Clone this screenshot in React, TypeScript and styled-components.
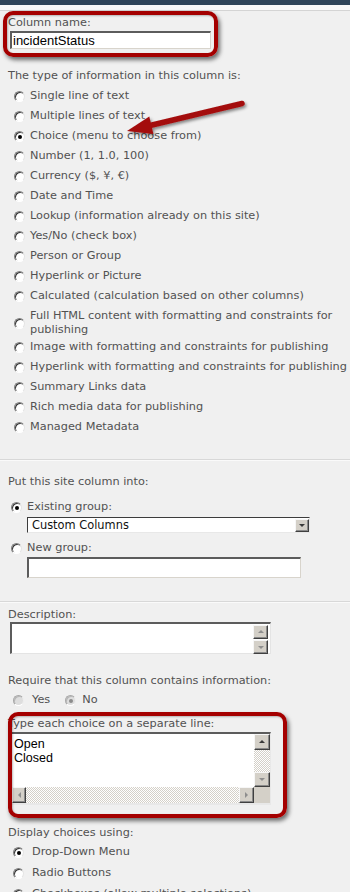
import React from "react";
import styled, { createGlobalStyle } from "styled-components";

const Global = createGlobalStyle`
  html, body { margin: 0; padding: 0; background: #f0f0f0; }
  body {
    font-family: "DejaVu Sans", Verdana, sans-serif;
    font-size: 11.3px;
    color: #525252;
  }
  #root { width: 350px; }
`;

const Page = styled.div`
  position: relative;
  width: 350px;
  height: 892px;
  overflow: hidden;
  background: #f0f0f0;
`;

const TopBar = styled.div`
  height: 5px;
  background: #2f4459;
`;

const TopStrip = styled.div`
  height: 5px;
  background: #f8f8f8;
  border-bottom: 1px solid #d4d4d4;
`;

const Rule = styled.div<{ $mt: number }>`
  margin-top: ${(p) => p.$mt}px;
  height: 1px;
  background: #d8d8d8;
  border-bottom: 1px solid #fafafa;
`;

const Label = styled.div<{ $mt: number }>`
  margin-top: ${(p) => p.$mt}px;
  padding-left: 8px;
  line-height: 14px;
  white-space: nowrap;
`;

const TextInput = styled.div<{ $mt: number; $ml: number; $w: number; $h: number }>`
  box-sizing: border-box;
  margin-top: ${(p) => p.$mt}px;
  margin-left: ${(p) => p.$ml}px;
  width: ${(p) => p.$w}px;
  height: ${(p) => p.$h}px;
  background: #fff;
  border-style: solid;
  border-width: 2px 1px 1px 2px;
  border-color: #5c5c5c #d8d4cc #d8d4cc #5c5c5c;
  font-family: "Liberation Sans", Arial, sans-serif;
  font-size: 13px;
  line-height: 15px;
  color: #000;
  padding-left: 1px;
  white-space: nowrap;
`;

const RadioList = styled.div<{ $mt: number }>`
  margin-top: ${(p) => p.$mt}px;
  display: flex;
  flex-direction: column;
`;

const OptionRow = styled.div<{ $indent: number; $gap: number; $pt?: number; $pb?: number }>`
  display: flex;
  align-items: center;
  gap: ${(p) => p.$gap}px;
  padding-left: ${(p) => p.$indent}px;
  padding-top: ${(p) => p.$pt ?? 3}px;
  padding-bottom: ${(p) => p.$pb ?? 3}px;
  line-height: 14px;
`;

const OptionText = styled.span<{ $wrap?: boolean }>`
  white-space: ${(p) => (p.$wrap ? "normal" : "nowrap")};
  max-width: ${(p) => (p.$wrap ? "318px" : "none")};
`;

const InlineOptions = styled.div<{ $mt: number }>`
  margin-top: ${(p) => p.$mt}px;
  display: flex;
  align-items: center;
`;

const Radio = styled.span<{ $checked?: boolean; $disabled?: boolean }>`
  flex: none;
  position: relative;
  box-sizing: border-box;
  width: 11px;
  height: 11px;
  border-radius: 50%;
  border: 1px solid;
  border-color: ${(p) =>
    p.$disabled ? "#a8a8a8 #eeeeee #ffffff #a8a8a8" : "#808080 #e4e4e4 #ffffff #808080"};
  background: ${(p) => (p.$disabled ? "#dedede" : "#ffffff")};
  box-shadow: inset 1px 1px 0 ${(p) => (p.$disabled ? "#b8b8b8" : "#3a3a3a")};
  &::after {
    content: "";
    display: ${(p) => (p.$checked ? "block" : "none")};
    position: absolute;
    left: 3px;
    top: 3px;
    width: 4px;
    height: 4px;
    border-radius: 50%;
    background: ${(p) => (p.$disabled ? "#8c8c8c" : "#000")};
  }
`;

const SelectBox = styled.div`
  box-sizing: border-box;
  margin-left: 27px;
  width: 283px;
  height: 16px;
  background: #fff;
  border-style: solid;
  border-width: 1px;
  border-color: #3c3c3c #e8e8e8 #e8e8e8 #3c3c3c;
  display: flex;
  align-items: center;
  font-size: 11.4px;
  color: #111;
`;

const SelectValue = styled.span`
  flex: 1;
  padding-left: 4px;
  line-height: 14px;
  white-space: nowrap;
`;

const ArrowButton = styled.div<{ $dir: "up" | "down" | "left" | "right"; $muted?: boolean; $w: number; $h: number }>`
  flex: none;
  box-sizing: border-box;
  width: ${(p) => p.$w}px;
  height: ${(p) => p.$h}px;
  background: #d4d0c8;
  border: 1px solid;
  border-color: #f6f6f6 #404040 #404040 #f6f6f6;
  box-shadow: inset -1px -1px 0 #8a8a8a;
  display: flex;
  align-items: center;
  justify-content: center;
  &::after {
    content: "";
    width: 0;
    height: 0;
    border: 3px solid transparent;
    ${(p) => {
      const c = p.$muted ? "#8e8e8e" : "#3a3a3a";
      switch (p.$dir) {
        case "up":
          return `border-bottom-color:${c}; border-top-width:0; margin-top:-1px;`;
        case "down":
          return `border-top-color:${c}; border-bottom-width:0;`;
        case "left":
          return `border-right-color:${c}; border-left-width:0;`;
        default:
          return `border-left-color:${c}; border-right-width:0;`;
      }
    }}
  }
`;

const DescBox = styled.div`
  box-sizing: border-box;
  margin-left: 10px;
  width: 261px;
  height: 32px;
  background: #fff;
  border-style: solid;
  border-width: 2px 1px 1px 2px;
  border-color: #5c5c5c #e4e4e4 #e4e4e4 #5c5c5c;
  display: flex;
  justify-content: flex-end;
  padding: 1px 2px 0 0;
`;

const ScrollColumn = styled.div`
  display: flex;
  flex-direction: column;
  gap: 1px;
`;

const ChoicesBox = styled.div`
  box-sizing: border-box;
  margin-top: 1px;
  margin-left: 10px;
  width: 261px;
  height: 73px;
  background: #fff;
  border-style: solid;
  border-width: 2px 1px 2px 2px;
  border-color: #5c5c5c #e8e8e8 #e8e8e8 #5c5c5c;
  display: grid;
  grid-template-columns: 1fr 16px;
  grid-template-rows: 1fr 16px;
`;

const ChoicesText = styled.div`
  padding: 3px 0 0 2px;
  font-family: "Liberation Sans", Arial, sans-serif;
  font-size: 12.5px;
  line-height: 14px;
  color: #000;
`;

const VScroll = styled.div`
  display: flex;
  flex-direction: column;
`;

const HScroll = styled.div`
  display: flex;
`;

const Track = styled.div`
  flex: 1;
  background: repeating-conic-gradient(#d4d0c8 0 25%, #ffffff 0 50%) 0 0 / 2px 2px;
`;

const Corner = styled.div`
  background: #d4d0c8;
`;

const Callout = styled.div<{ $x: number; $y: number; $w: number; $h: number }>`
  position: absolute;
  left: ${(p) => p.$x}px;
  top: ${(p) => p.$y}px;
  width: ${(p) => p.$w}px;
  height: ${(p) => p.$h}px;
  box-sizing: border-box;
  border: 4px solid #a40000;
  border-radius: 10px;
  box-shadow: 2px 3px 4px rgba(0, 0, 0, 0.55), inset 1px 1px 2px rgba(0, 0, 0, 0.25);
  pointer-events: none;
`;

const ArrowSvg = styled.svg`
  position: absolute;
  left: 0;
  top: 0;
  pointer-events: none;
`;

const types: string[] = [
  "Single line of text",
  "Multiple lines of text",
  "Choice (menu to choose from)",
  "Number (1, 1.0, 100)",
  "Currency ($, ¥, €)",
  "Date and Time",
  "Lookup (information already on this site)",
  "Yes/No (check box)",
  "Person or Group",
  "Hyperlink or Picture",
  "Calculated (calculation based on other columns)",
  "Full HTML content with formatting and constraints for publishing",
  "Image with formatting and constraints for publishing",
  "Hyperlink with formatting and constraints for publishing",
  "Summary Links data",
  "Rich media data for publishing",
  "Managed Metadata",
];

export default function App() {
  return (
    <>
      <Global />
      <Page>
        <TopBar />
        <TopStrip />

        <Label $mt={5}>Column name:</Label>
        <TextInput $mt={1} $ml={10} $w={201} $h={18}>
          incidentStatus
        </TextInput>

        <Label $mt={20}>The type of information in this column is:</Label>
        <RadioList $mt={3}>
          {types.map((t, i) => {
            const wrap = i === 11;
            return (
              <OptionRow key={t} $indent={14} $gap={5} $pb={wrap ? 0 : 3}>
                <Radio $checked={i === 2} />
                <OptionText $wrap={wrap}>{t}</OptionText>
              </OptionRow>
            );
          })}
        </RadioList>

        <Rule $mt={22} />

        <Label $mt={14}>Put this site column into:</Label>
        <OptionRow $indent={11} $gap={5} $pt={11}>
          <Radio $checked />
          <OptionText>Existing group:</OptionText>
        </OptionRow>
        <SelectBox>
          <SelectValue>Custom Columns</SelectValue>
          <ArrowButton $dir="down" $w={14} $h={13} />
        </SelectBox>
        <OptionRow $indent={11} $gap={5} $pt={8} $pb={2}>
          <Radio />
          <OptionText>New group:</OptionText>
        </OptionRow>
        <TextInput $mt={0} $ml={27} $w={274} $h={21} />

        <Rule $mt={23} />

        <Label $mt={5}>Description:</Label>
        <DescBox>
          <ScrollColumn>
            <ArrowButton $dir="up" $muted $w={15} $h={14} />
            <ArrowButton $dir="down" $muted $w={15} $h={14} />
          </ScrollColumn>
        </DescBox>

        <Label $mt={20}>Require that this column contains information:</Label>
        <InlineOptions $mt={2}>
          <OptionRow $indent={13} $gap={8}>
            <Radio $disabled />
            <OptionText>Yes</OptionText>
          </OptionRow>
          <OptionRow $indent={15} $gap={6}>
            <Radio $disabled $checked />
            <OptionText>No</OptionText>
          </OptionRow>
        </InlineOptions>

        <Label $mt={7}>Type each choice on a separate line:</Label>
        <ChoicesBox>
          <ChoicesText>
            Open
            <br />
            Closed
          </ChoicesText>
          <VScroll>
            <ArrowButton $dir="up" $w={16} $h={16} />
            <Track />
            <ArrowButton $dir="down" $muted $w={16} $h={15} />
          </VScroll>
          <HScroll>
            <ArrowButton $dir="left" $muted $w={14} $h={16} />
            <Track />
            <ArrowButton $dir="right" $muted $w={15} $h={16} />
          </HScroll>
          <Corner />
        </ChoicesBox>

        <Label $mt={21}>Display choices using:</Label>
        <RadioList $mt={2}>
          <OptionRow $indent={13} $gap={8} $pb={4}>
            <Radio $checked />
            <OptionText>Drop-Down Menu</OptionText>
          </OptionRow>
          <OptionRow $indent={13} $gap={8} $pb={4}>
            <Radio />
            <OptionText>Radio Buttons</OptionText>
          </OptionRow>
          <OptionRow $indent={13} $gap={8} $pb={4}>
            <Radio />
            <OptionText>Checkboxes (allow multiple selections)</OptionText>
          </OptionRow>
        </RadioList>

        <Callout $x={3} $y={11} $w={215} $h={46} />
        <Callout $x={8} $y={712} $w={279} $h={106} />

        <ArrowSvg width={350} height={160} viewBox="0 0 350 160">
          <defs>
            <filter id="arrowShadow" x="-20%" y="-50%" width="140%" height="200%">
              <feDropShadow dx="1.5" dy="2" stdDeviation="1.5" floodColor="#000" floodOpacity="0.45" />
            </filter>
          </defs>
          <g filter="url(#arrowShadow)">
            <line x1="242" y1="103.5" x2="150" y2="125.5" stroke="#a40e0e" strokeWidth="5.5" strokeLinecap="round" />
            <polygon points="127,131 149.3,116.5 153.4,134.1" fill="#a40e0e" />
          </g>
        </ArrowSvg>
      </Page>
    </>
  );
}
